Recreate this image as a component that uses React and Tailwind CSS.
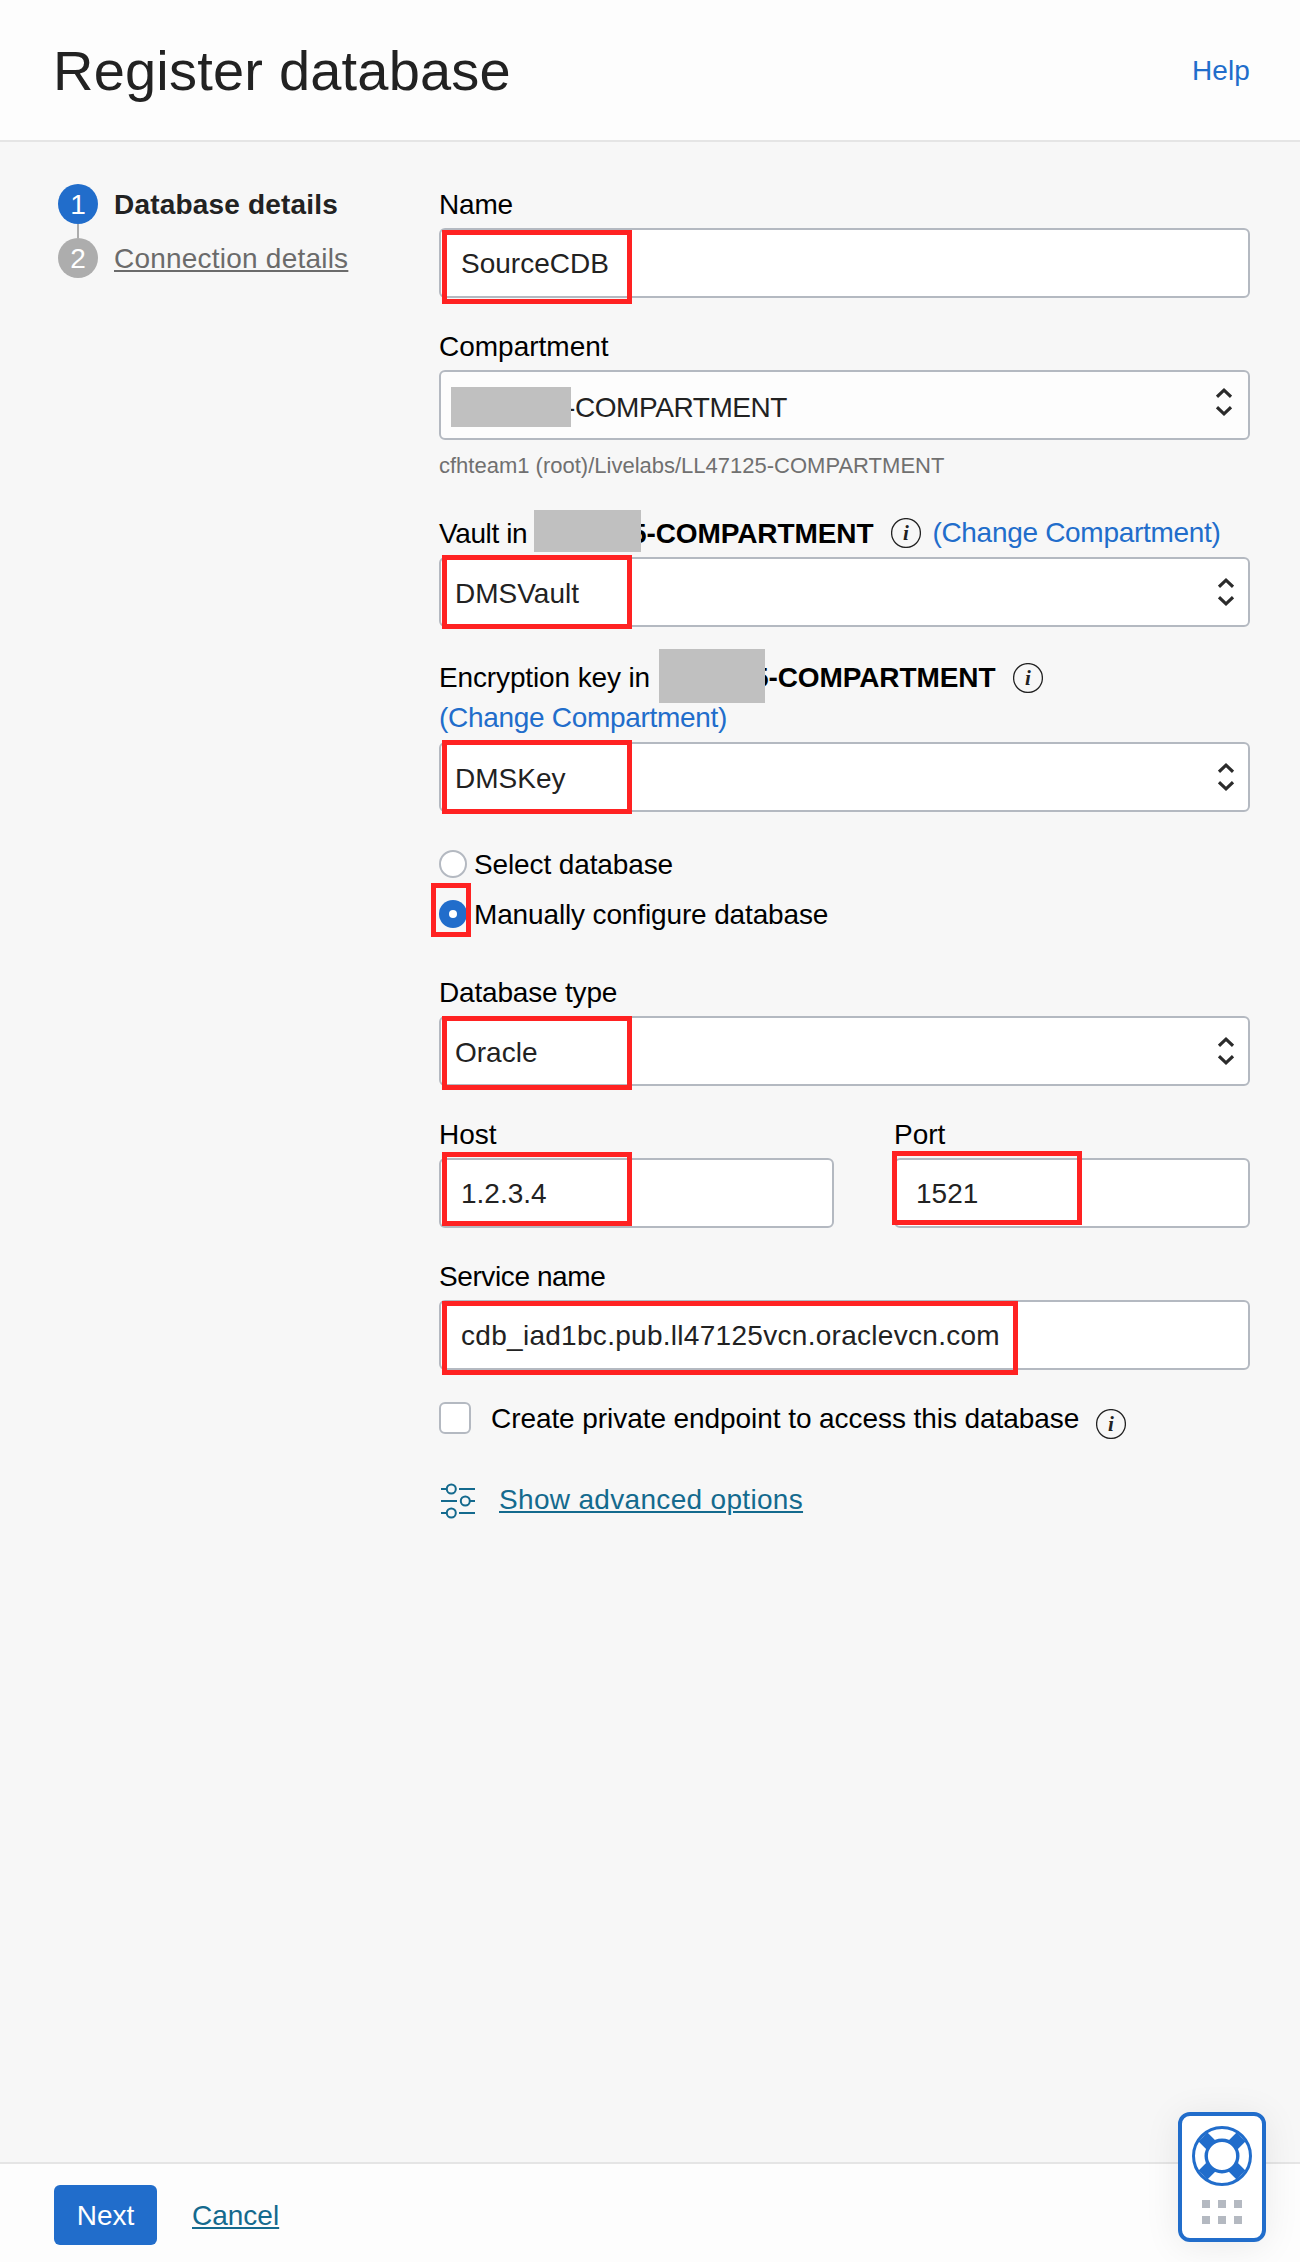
import React from 'react';

function InfoIcon({ className = '' }) {
  return (
    <svg viewBox="0 0 30 30" className={`h-[30px] w-[30px] shrink-0 ${className}`}>
      <circle cx="15" cy="15" r="14.4" fill="none" stroke="#222" strokeWidth="1.3" />
      <text
        x="15"
        y="21.5"
        textAnchor="middle"
        className="text-[21px] font-bold italic"
        fontFamily="'Liberation Serif', serif"
        fill="#222"
      >
        i
      </text>
    </svg>
  );
}

function Chevrons({ className = '' }) {
  return (
    <svg
      viewBox="0 0 16 28"
      className={`ml-auto h-7 w-4 shrink-0 ${className}`}
      fill="none"
      stroke="#2b2b2b"
      strokeWidth="3.1"
    >
      <path d="M1 8.800 8 2.200l7 6.600" />
      <path d="M1 19.200 8 25.800l7-6.600" />
    </svg>
  );
}

function Highlight({ className }) {
  return (
    <div className={`pointer-events-none absolute box-border border-[5px] border-[#ff2222] ${className}`} />
  );
}

function Redacted({ className }) {
  return <span className={`relative z-10 shrink-0 bg-[#c0c0c0] ${className}`} />;
}

function Label({ children }) {
  return <div className="mb-1 h-10 whitespace-nowrap text-black">{children}</div>;
}

function TextBox({ children, highlight, tracking = '' }) {
  return (
    <div className="relative flex h-[70px] items-center rounded-md border-2 border-[#b4b9c1] bg-white pl-5">
      <span className={tracking}>{children}</span>
      <Highlight className={highlight} />
    </div>
  );
}

function SelectBox({ children, highlight }) {
  return (
    <div className="relative flex h-[70px] items-center rounded-md border-2 border-[#b4b9c1] bg-white pl-3.5 pr-3.5">
      <span className="pt-0.5">{children}</span>
      <Chevrons />
      <Highlight className={highlight} />
    </div>
  );
}

function Step({ number, active, children }) {
  return (
    <div className="flex h-10 items-center">
      <span
        className={`mr-4 flex h-10 w-10 items-center justify-center rounded-full text-white ${
          active ? 'bg-[#216dcb]' : 'bg-[#adadad]'
        }`}
      >
        {number}
      </span>
      {children}
    </div>
  );
}

function SlidersIcon() {
  return (
    <svg
      viewBox="0 0 34 36"
      className="mt-1 h-9 w-[34px] shrink-0"
      fill="none"
      stroke="#146a8e"
      strokeWidth="2"
    >
      <path d="M0 6h5.500M18 6h16M0 18h16M29 18h5M0 30h5.500M18 30h16" />
      <circle cx="10.300" cy="6" r="4.500" />
      <circle cx="24.300" cy="18" r="4.500" />
      <circle cx="10.300" cy="30" r="4.500" />
    </svg>
  );
}

function Lifebuoy() {
  return (
    <svg viewBox="0 0 60 60" className="h-[60px] w-[60px]" fill="none" stroke="#216dcb">
      <path d="M11 11 49 49M49 11 11 49" strokeWidth="12.500" />
      <circle cx="30" cy="30" r="28.500" strokeWidth="3" />
      <circle cx="30" cy="30" r="15.800" strokeWidth="3.400" fill="#fff" />
    </svg>
  );
}

function HelpWidget() {
  return (
    <div className="absolute bottom-5 right-[34px] flex h-[130px] w-[88px] flex-col items-center rounded-xl border-4 border-[#216dcb] bg-white pt-2.5 shadow-[0_4px_36px_rgba(0,0,0,0.08)]">
      <Lifebuoy />
      <div className="mt-3.5 grid grid-cols-3 gap-2">
        {[0, 1, 2, 3, 4, 5].map((n) => (
          <span key={n} className="h-2 w-2 bg-[#b4b9c1]" />
        ))}
      </div>
    </div>
  );
}

export default function App() {
  return (
    <div className="relative flex h-[2262px] w-[1300px] flex-col bg-[#f7f7f7] font-['Liberation_Sans',Arial,sans-serif] text-[28px] leading-[41px] text-[#222]">
      <header className="flex h-[142px] shrink-0 items-center justify-between border-b-2 border-[#e5e5e5] bg-[#fdfdfd] pl-[53px] pr-[50px]">
        <h1 className="pt-0.5 text-[56px] leading-[60px] tracking-[0.2px]">Register database</h1>
        <a className="tracking-[0.1px] text-[#216dcb]">Help</a>
      </header>

      <div className="flex grow pl-[58px] pr-[50px] pt-[42px]">
        <nav className="w-[381px] shrink-0">
          <Step number="1" active>
            <span className="font-bold tracking-[0.19px]">Database details</span>
          </Step>
          <div className="ml-[19px] h-3.5 w-0.5 bg-[#adadad]" />
          <Step number="2">
            <span className="tracking-[0.22px] text-[#6b6b6b] underline decoration-2 underline-offset-2">
              Connection details
            </span>
          </Step>
        </nav>

        <main className="w-[811px]">
          <Label>
            <span className="tracking-[-0.2px]">Name</span>
          </Label>
          <TextBox highlight="left-[1px] top-0 h-[74px] w-[190px]">SourceCDB</TextBox>

          <div className="mt-7">
            <Label>Compartment</Label>
            <div className="flex h-[70px] items-center rounded-md border-2 border-[#b4b9c1] bg-[#fdfdfd] pl-2.5 pr-4">
              <Redacted className="mt-1 h-10 w-[120px]" />
              <span className="-ml-[5px] pt-1 tracking-[-0.42px]">-COMPARTMENT</span>
              <Chevrons className="mb-1.5" />
            </div>
            <div className="mt-1.5 text-[22px] leading-10 text-[#707070]">
              cfhteam1 (root)/Livelabs/LL47125-COMPARTMENT
            </div>
          </div>

          <div className="mt-[27px]">
            <div className="mb-1 flex h-10 items-center whitespace-nowrap text-black">
              <span className="w-[95px] tracking-[-0.39px]">Vault in</span>
              <Redacted className="-mt-1 h-[42px] w-[107px]" />
              <b className="-ml-2.5 tracking-[-0.1px]">5-COMPARTMENT</b>
              <InfoIcon className="ml-[18px]" />
              <a className="-mt-0.5 ml-[11px] tracking-[-0.3px] text-[#216dcb]">(Change Compartment)</a>
            </div>
            <SelectBox highlight="left-[1px] -top-1 h-[74px] w-[190px]">DMSVault</SelectBox>
          </div>

          <div className="mt-[30px]">
            <div className="flex h-10 items-center whitespace-nowrap text-black">
              <span className="w-[220px] tracking-[-0.13px]">Encryption key in</span>
              <Redacted className="-mt-0.5 h-[54px] w-[106px]" />
              <b className="-ml-3 tracking-[-0.1px]">5-COMPARTMENT</b>
              <InfoIcon className="ml-[18px] mt-0.5" />
            </div>
            <a className="mb-[5px] block h-10 tracking-[-0.3px] text-[#216dcb]">(Change Compartment)</a>
            <SelectBox highlight="left-[1px] -top-1 h-[74px] w-[190px]">DMSKey</SelectBox>
          </div>

          <div className="mt-8 flex flex-col gap-2.5 text-black">
            <div className="flex h-10 items-center">
              <span className="mr-[7px] h-7 w-7 rounded-full border-2 border-[#b4b9c1] bg-white" />
              <span className="tracking-[-0.12px]">Select database</span>
            </div>
            <div className="relative flex h-10 items-center">
              <span className="mr-[7px] flex h-7 w-7 items-center justify-center rounded-full bg-[#216dcb]">
                <span className="h-2 w-2 rounded-full bg-white" />
              </span>
              <span className="tracking-[-0.14px]">Manually configure database</span>
              <Highlight className="-left-2 -top-[11px] h-[54px] w-10" />
            </div>
          </div>

          <div className="mt-[38px]">
            <Label>
              <span className="tracking-[-0.18px]">Database type</span>
            </Label>
            <SelectBox highlight="left-[1px] -top-0.5 h-[74px] w-[190px]">Oracle</SelectBox>
          </div>

          <div className="mt-7 flex gap-[60px]">
            <div className="w-[395px]">
              <Label>Host</Label>
              <TextBox highlight="left-[1px] -top-2 h-[74px] w-[190px]">1.2.3.4</TextBox>
            </div>
            <div className="grow">
              <Label>Port</Label>
              <TextBox highlight="-left-1 -top-[9px] h-[74px] w-[190px]">1521</TextBox>
            </div>
          </div>

          <div className="mt-7">
            <Label>
              <span className="tracking-[-0.4px]">Service name</span>
            </Label>
            <TextBox tracking="tracking-[0.29px]" highlight="left-[1px] -top-[1px] h-[74px] w-[576px]">
              cdb_iad1bc.pub.ll47125vcn.oraclevcn.com
            </TextBox>
          </div>

          <div className="mt-7 flex h-10 items-center whitespace-nowrap text-black">
            <span className="mr-5 h-8 w-8 shrink-0 rounded-md border-2 border-[#b4b9c1] bg-white" />
            <span className="tracking-[-0.07px]">Create private endpoint to access this database</span>
            <InfoIcon className="ml-[17px] mt-3" />
          </div>

          <div className="ml-0.5 mt-[41px] flex h-10 items-center text-[#146a8e]">
            <SlidersIcon />
            <a className="ml-6 tracking-[0.32px] underline decoration-2 underline-offset-2">
              Show advanced options
            </a>
          </div>
        </main>
      </div>

      <footer className="flex h-[100px] shrink-0 items-start border-t-2 border-[#e5e5e5] bg-[#fdfdfd] pl-[54px] pt-[21px]">
        <button className="h-[60px] w-[103px] rounded-md bg-[#216dcb] text-white">Next</button>
        <a className="ml-[35px] mt-2.5 text-[#146a8e] underline decoration-2 underline-offset-2">Cancel</a>
      </footer>

      <HelpWidget />
    </div>
  );
}
